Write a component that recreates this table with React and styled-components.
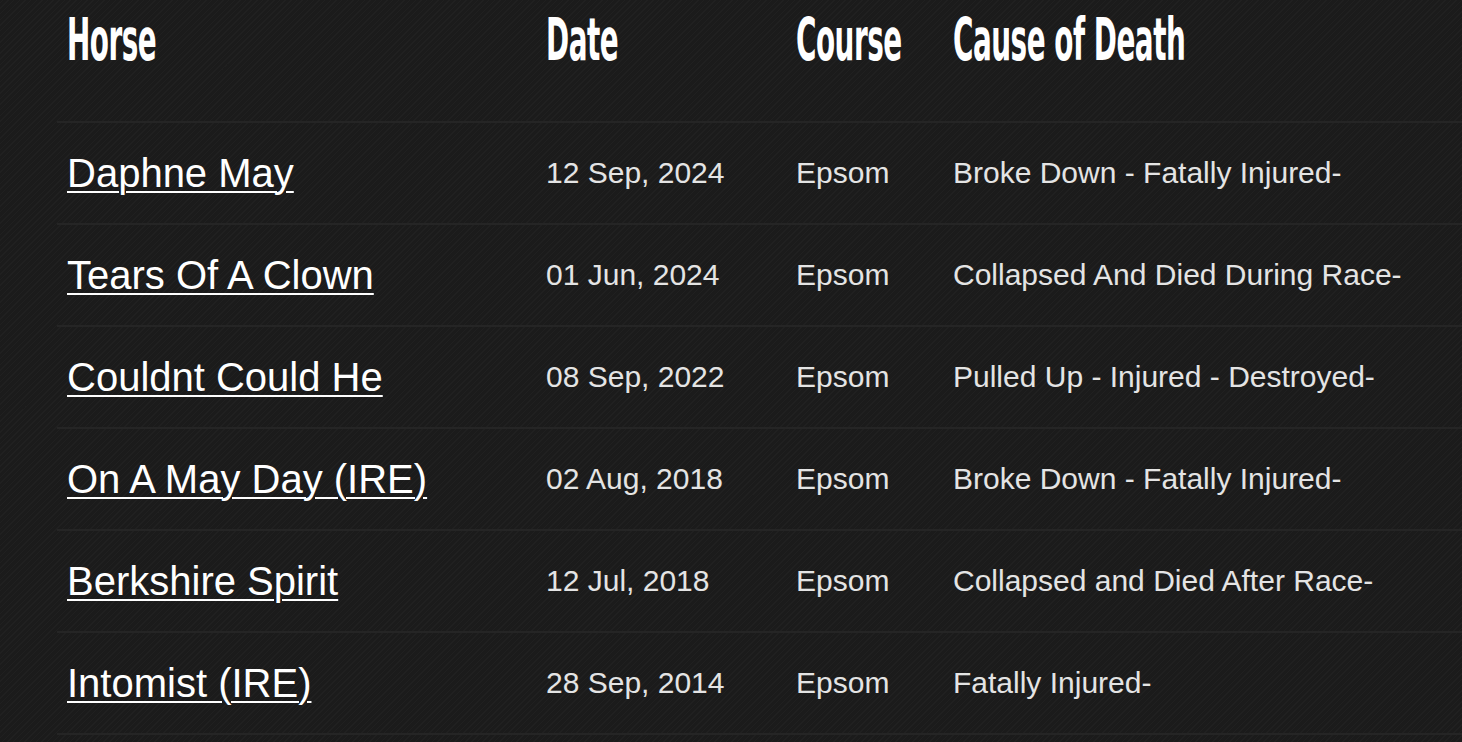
import React from "react";
import styled, { createGlobalStyle } from "styled-components";

const GlobalStyle = createGlobalStyle`
  html, body {
    margin: 0;
    padding: 0;
    background-color: #1b1b1b;
  }
  body {
    font-family: "Liberation Sans", Arial, sans-serif;
    color: #fff;
    overflow: hidden;
  }
`;

const deaths = [
  { horse: "Daphne May", date: "12 Sep, 2024", course: "Epsom", cause: "Broke Down - Fatally Injured-" },
  { horse: "Tears Of A Clown", date: "01 Jun, 2024", course: "Epsom", cause: "Collapsed And Died During Race-" },
  { horse: "Couldnt Could He", date: "08 Sep, 2022", course: "Epsom", cause: "Pulled Up - Injured - Destroyed-" },
  { horse: "On A May Day (IRE)", date: "02 Aug, 2018", course: "Epsom", cause: "Broke Down - Fatally Injured-" },
  { horse: "Berkshire Spirit", date: "12 Jul, 2018", course: "Epsom", cause: "Collapsed and Died After Race-" },
  { horse: "Intomist (IRE)", date: "28 Sep, 2014", course: "Epsom", cause: "Fatally Injured-" },
];

const columns = "479px 250px 157px 1fr";

const Page = styled.div`
  min-height: 742px;
  padding-left: 57px;
  background-color: #1b1b1b;
  background-image: repeating-linear-gradient(
    -45deg,
    rgba(255, 255, 255, 0.022) 0px,
    rgba(255, 255, 255, 0.022) 1px,
    transparent 1px,
    transparent 4px
  );
`;

const Table = styled.div`
  display: flex;
  flex-direction: column;
`;

const HeadRow = styled.div`
  display: grid;
  grid-template-columns: ${columns};
  height: 121px;
  border-bottom: 2px solid #252525;
`;

const HeadCell = styled.div`
  padding: 11px 10px 0;
  white-space: nowrap;
`;

const HeadText = styled.span`
  display: inline-block;
  font-family: "DejaVu Sans", sans-serif;
  font-weight: 700;
  font-size: 58px;
  line-height: 1;
  letter-spacing: -1px;
  transform: scaleX(0.48);
  transform-origin: left top;
`;

const Row = styled.div`
  display: grid;
  grid-template-columns: ${columns};
  height: 100px;
  border-bottom: 2px solid #252525;
`;

const Cell = styled.div`
  display: flex;
  align-items: center;
  padding: 0 10px;
  white-space: nowrap;
  font-size: 30px;
  color: #e4e4e4;
`;

const HorseLink = styled.a`
  font-size: 40px;
  color: #fff;
  text-decoration: underline;
  text-decoration-thickness: 2px;
  text-underline-offset: 4px;
`;

export default function App() {
  return (
    <Page>
      <GlobalStyle />
      <Table>
        <HeadRow>
          <HeadCell><HeadText>Horse</HeadText></HeadCell>
          <HeadCell><HeadText>Date</HeadText></HeadCell>
          <HeadCell><HeadText>Course</HeadText></HeadCell>
          <HeadCell><HeadText>Cause of Death</HeadText></HeadCell>
        </HeadRow>
        {deaths.map((d) => (
          <Row key={d.horse}>
            <Cell>
              <HorseLink href="#">{d.horse}</HorseLink>
            </Cell>
            <Cell>{d.date}</Cell>
            <Cell>{d.course}</Cell>
            <Cell>{d.cause}</Cell>
          </Row>
        ))}
      </Table>
    </Page>
  );
}
